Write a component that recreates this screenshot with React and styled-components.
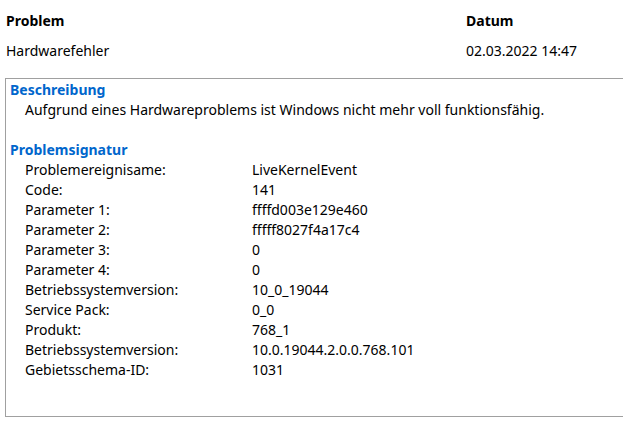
import React from "react";
import styled, { createGlobalStyle } from "styled-components";

const Global = createGlobalStyle`
  body {
    margin: 0;
    background: #ffffff;
    font-family: "Noto Sans", "Open Sans", sans-serif;
    font-size: 14px;
    color: #000;
    overflow: hidden;
  }
`;

const Page = styled.div`
  width: 623px;
  height: 426px;
  display: flex;
  flex-direction: column;
`;

const HeadRow = styled.div`
  display: grid;
  grid-template-columns: 460px 1fr;
  padding: 0 0 0 6px;
  height: ${(p) => p.$h}px;
  align-items: center;
  font-weight: ${(p) => (p.$bold ? 700 : 400)};
`;

const Box = styled.div`
  margin: 21px -4px 0 5px;
  height: 339px;
  border: 1px solid #a0a0a0;
  box-sizing: border-box;
  padding: 1px 0 0 4px;
`;

const SectionTitle = styled.div`
  color: #0066cc;
  font-weight: 700;
  line-height: 20px;
`;

const Para = styled.div`
  padding-left: 15px;
  line-height: 20px;
  margin-bottom: ${(p) => p.$gap || 0}px;
`;

const Grid = styled.div`
  display: grid;
  grid-template-columns: 227px 1fr;
  padding-left: 15px;
  line-height: 20px;
`;

const rows = [
  ["Problemereignisame:", "LiveKernelEvent"],
  ["Code:", "141"],
  ["Parameter 1:", "ffffd003e129e460"],
  ["Parameter 2:", "fffff8027f4a17c4"],
  ["Parameter 3:", "0"],
  ["Parameter 4:", "0"],
  ["Betriebssystemversion:", "10_0_19044"],
  ["Service Pack:", "0_0"],
  ["Produkt:", "768_1"],
  ["Betriebssystemversion:", "10.0.19044.2.0.0.768.101"],
  ["Gebietsschema-ID:", "1031"],
];

export default function App() {
  return (
    <Page>
      <Global />
      <HeadRow $bold $h={41}>
        <span>Problem</span>
        <span>Datum</span>
      </HeadRow>
      <HeadRow $h={16}>
        <span>Hardwarefehler</span>
        <span>02.03.2022 14:47</span>
      </HeadRow>
      <Box>
        <SectionTitle>Beschreibung</SectionTitle>
        <Para $gap={20}>
          Aufgrund eines Hardwareproblems ist Windows nicht mehr voll funktionsfähig.
        </Para>
        <SectionTitle>Problemsignatur</SectionTitle>
        <Grid>
          {rows.map(([k, v], i) => (
            <React.Fragment key={i}>
              <span>{k}</span>
              <span>{v}</span>
            </React.Fragment>
          ))}
        </Grid>
      </Box>
    </Page>
  );
}
